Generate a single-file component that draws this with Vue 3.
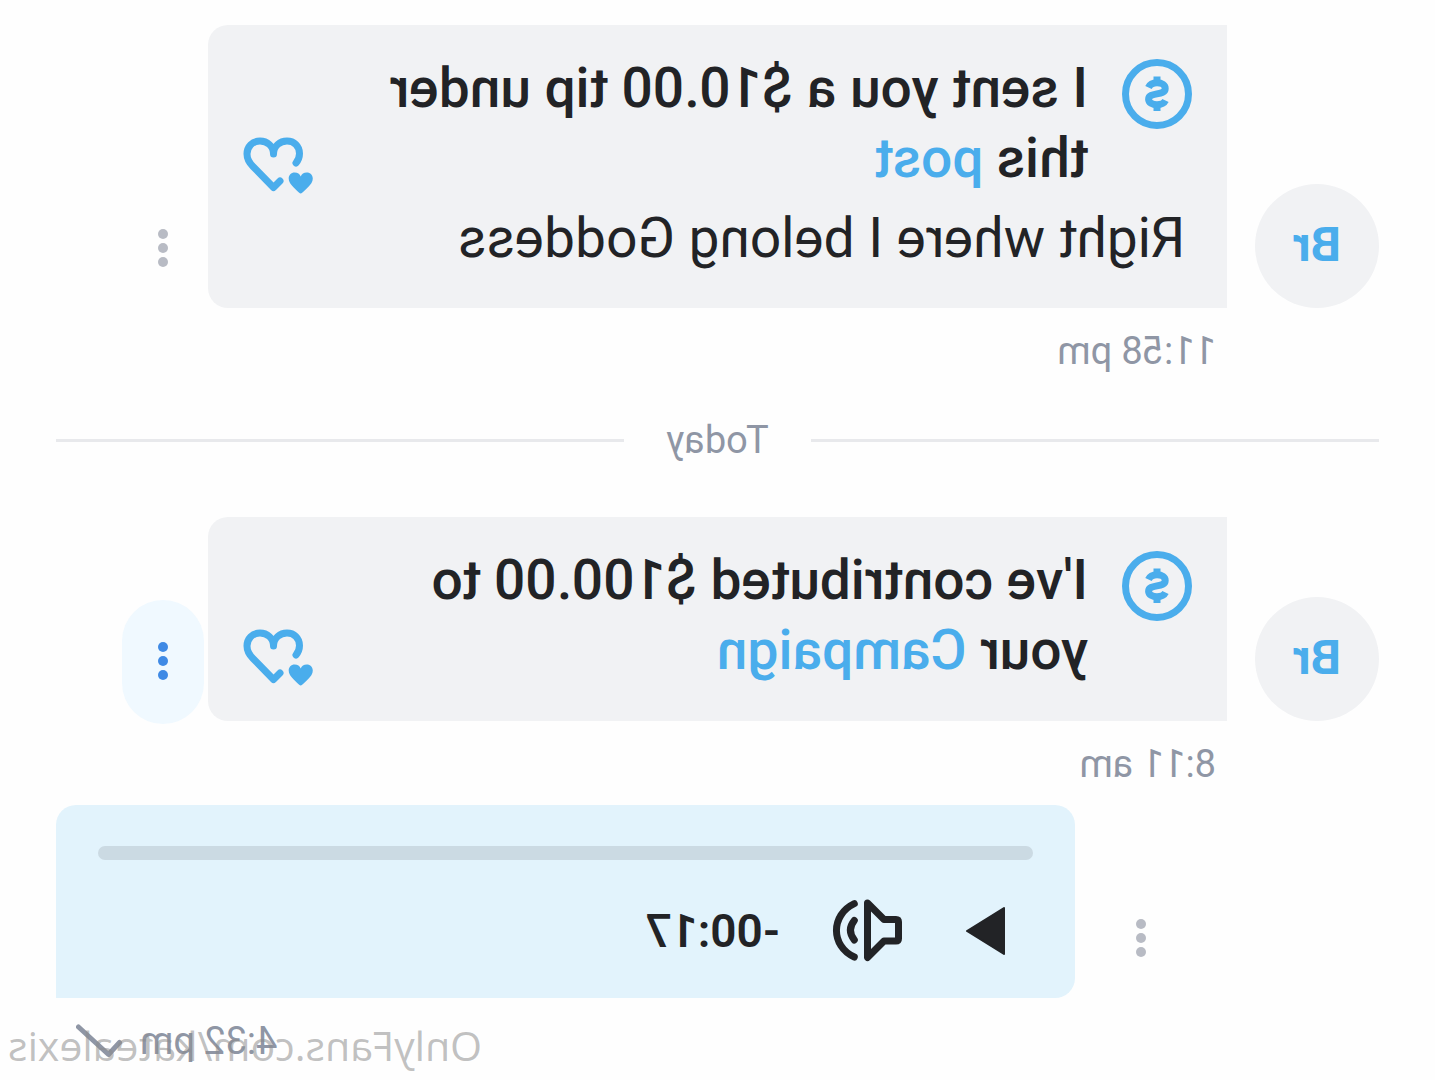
<template>
  <main class="chat">
    <template v-for="msg in messages" :key="msg.id">
      <div v-if="msg.day" class="day">
        <span class="day-text">{{ msg.day }}</span>
      </div>

      <article class="message">
        <div class="message-row">
          <div class="avatar">{{ msg.initials }}</div>
          <div class="bubble">
            <div class="tip">
              <svg class="tip-icon" viewBox="0 0 70 70" aria-hidden="true">
                <circle cx="35" cy="35" r="31.5" fill="none" stroke="currentColor" stroke-width="7" />
                <path
                  d="M43.5 28.5C42 25 39 23.8 35 23.8C30 23.8 26.8 26.2 26.8 29.4C26.8 37.2 43.4 32.6 43.4 40.3C43.4 43.8 39.5 45.7 35 45.7C31 45.7 28 44.5 26.5 41.5"
                  fill="none"
                  stroke="currentColor"
                  stroke-width="7"
                />
                <path d="M31.5 17.5h7v6h-7zM31.5 46h7v6h-7z" fill="currentColor" />
              </svg>
              <p class="tip-text">{{ msg.text }} <a href="#">{{ msg.link }}</a></p>
              <button type="button" class="like" aria-label="Like">
                <svg class="like-icon" viewBox="0 0 70 57" aria-hidden="true">
                  <path
                    d="M17 26C14.5 23 13.5 20 13.5 16.5C13.5 9 19 4 26 4C33 4 39.5 9 39.5 17C39.5 9 46 4 53 4C60.5 4 66 9.5 66 17C66 22 63.5 26 60 29.5L39.5 50.5L33 44"
                    fill="none"
                    stroke="currentColor"
                    stroke-width="7"
                    stroke-linecap="round"
                    stroke-linejoin="round"
                  />
                  <path
                    d="M12.3 56.5C11 56.5 2.5 48 1.5 46C-1.5 41 1 35.5 6.3 35.5C9.3 35.5 11.3 37 12.3 39.5C13.3 37 15.3 35.5 18.3 35.5C23.6 35.5 26 41 23 46C22 48 13.6 56.5 12.3 56.5Z"
                    fill="currentColor"
                  />
                </svg>
              </button>
            </div>
            <p v-if="msg.note" class="note">{{ msg.note }}</p>
          </div>
          <button type="button" class="more" :class="{ active: msg.menuOpen }" aria-label="Message options">
            <span class="dot"></span>
            <span class="dot"></span>
            <span class="dot"></span>
          </button>
        </div>
        <div class="meta">
          <time>{{ msg.time }}</time>
        </div>
      </article>
    </template>

    <article class="message own">
      <div class="message-row">
        <button type="button" class="more" aria-label="Message options">
          <span class="dot"></span>
          <span class="dot"></span>
          <span class="dot"></span>
        </button>
        <div class="bubble audio">
          <input v-model="position" class="track" type="range" min="0" max="17" aria-label="Seek">
          <div class="controls">
            <button type="button" class="control" aria-label="Play">
              <svg class="play-icon" viewBox="0 0 39 48" aria-hidden="true">
                <path d="M1 1L38 24L1 47Z" fill="currentColor" stroke="currentColor" stroke-width="2" stroke-linejoin="round" />
              </svg>
            </button>
            <button type="button" class="control" aria-label="Mute">
              <svg class="sound-icon" viewBox="0 0 70 63" aria-hidden="true">
                <g fill="none" stroke="currentColor" stroke-width="7" stroke-linecap="round" stroke-linejoin="round">
                  <path d="M34.5 4L18 20.5H6Q3.5 20.5 3.5 23V39.5Q3.500 42 6 42H18L34.5 58.5Z" />
                  <path d="M47.7 21.5Q55.5 31 47.7 41" />
                  <path d="M47.7 4.7C71.5 16 71.5 47 47.7 58" />
                </g>
              </svg>
            </button>
            <span class="remaining">-00:17</span>
          </div>
        </div>
      </div>
      <div class="meta">
        <time>4:32 pm</time>
        <svg class="tick-icon" viewBox="0 0 46 34" aria-hidden="true">
          <path d="M2.5 18.5L13.5 30.5L43.5 3" fill="none" stroke="currentColor" stroke-width="5" stroke-linecap="round" stroke-linejoin="round" />
        </svg>
      </div>
    </article>

    <div class="watermark">OnlyFans.com/katealexis</div>
  </main>
</template>

<script setup>
import { ref } from 'vue'

const position = ref(0)

const messages = [
  {
    id: 1,
    initials: 'Br',
    text: 'I sent you a $10.00 tip under this',
    link: 'post',
    note: 'Right where I belong Goddess',
    time: '11:58 pm'
  },
  {
    id: 2,
    day: 'Today',
    initials: 'Br',
    text: "I've contributed $100.00 to your",
    link: 'Campaign',
    time: '8:11 am',
    menuOpen: true
  }
]
</script>

<style>
body {
  margin: 0;
  background: #fefefe;
}
</style>

<style scoped>
/* the whole conversation is flipped, like a selfie camera view */
.chat {
  position: relative;
  box-sizing: border-box;
  min-height: 100vh;
  padding: 25px 56px 0;
  overflow: hidden;
  background: #fefefe;
  color: #222326;
  font-family: Roboto, "Liberation Sans", sans-serif;
  transform: scaleX(-1);
}

button {
  padding: 0;
  border: 0;
  background: none;
  color: inherit;
  font: inherit;
  cursor: pointer;
}

svg {
  display: block;
}

.message {
  margin-bottom: 8px;
}

.message:last-of-type {
  margin-bottom: 0;
}

.message-row {
  display: flex;
  align-items: flex-end;
}

.avatar {
  display: flex;
  align-items: center;
  justify-content: center;
  flex: none;
  box-sizing: border-box;
  width: 124px;
  height: 124px;
  margin-right: 28px;
  padding-bottom: 4px;
  border-radius: 50%;
  background: #f1f2f4;
  color: #4aadec;
  font-size: 48px;
  font-weight: 700;
}

.bubble {
  box-sizing: border-box;
  width: 77%;
  padding: 28px 35px 35px;
  border-radius: 0 20px 20px 0;
  background: #f1f2f4;
}

.tip {
  display: flex;
  align-items: flex-start;
  min-height: 141px;
}

.tip-icon {
  flex: none;
  width: 70px;
  height: 70px;
  margin-top: 6px;
  color: #4aadec;
}

.tip-text {
  flex: 1;
  margin: 0 35px 0 34px;
  font-size: 55px;
  font-weight: 500;
  line-height: 70px;
}

.tip-text a {
  color: #4aadec;
  text-decoration: none;
}

.like {
  align-self: flex-end;
  flex: none;
  color: #4aadec;
}

.like-icon {
  width: 70px;
  height: 57px;
}

.note {
  margin: 9px 0 0 7px;
  font-size: 55px;
  line-height: 70px;
}

.more {
  display: flex;
  flex-direction: column;
  align-items: center;
  justify-content: center;
  gap: 4px;
  flex: none;
  box-sizing: border-box;
  width: 82px;
  height: 124px;
  margin: 0 0 -3px 4px;
  padding-bottom: 3px;
  border-radius: 41px;
  color: #b8bbc4;
}

.more.active {
  background: #f0f9ff;
  color: #3f8ae5;
}

.dot {
  width: 10px;
  height: 10px;
  border-radius: 50%;
  background: currentColor;
}

.meta {
  display: flex;
  align-items: center;
  height: 76px;
  padding-left: 163px;
  padding-top: 10px;
  box-sizing: border-box;
  color: #8f96a5;
  font-size: 38px;
  line-height: 46px;
}

.own .message-row {
  justify-content: flex-end;
}

.own .more {
  margin-right: 25px;
}

.own .meta {
  justify-content: flex-end;
  gap: 18px;
  padding-left: 0;
  padding-right: 20px;
}

.tick-icon {
  width: 46px;
  height: 34px;
}

.audio {
  padding: 41px 42px 36px;
  border-radius: 20px 20px 0 20px;
  background: #e2f3fc;
}

.track {
  display: block;
  width: 100%;
  height: 14px;
  margin: 0;
  border-radius: 7px;
  background: #cbdae3;
  appearance: none;
}

.track::-webkit-slider-thumb {
  width: 1px;
  height: 1px;
  opacity: 0;
  appearance: none;
}

.controls {
  display: flex;
  align-items: center;
  margin-top: 39px;
  padding-left: 28px;
}

.control {
  margin-right: 64px;
}

.play-icon {
  width: 39px;
  height: 48px;
}

.sound-icon {
  width: 70px;
  height: 63px;
}

.remaining {
  margin-left: -12px;
  font-size: 46px;
  font-weight: 600;
}

.day {
  display: flex;
  align-items: center;
  gap: 42px;
  margin: 32px 0 53px;
  color: #8f96a5;
  font-size: 38px;
  line-height: 48px;
}

.day::before,
.day::after {
  content: "";
  flex: 1;
  height: 3px;
  background: #e8e9ec;
}

.watermark {
  position: absolute;
  right: 8px;
  bottom: 8px;
  color: rgba(140, 140, 140, 0.55);
  font-family: "Open Sans", "Noto Sans", sans-serif;
  font-size: 41px;
  line-height: 54px;
}
</style>
